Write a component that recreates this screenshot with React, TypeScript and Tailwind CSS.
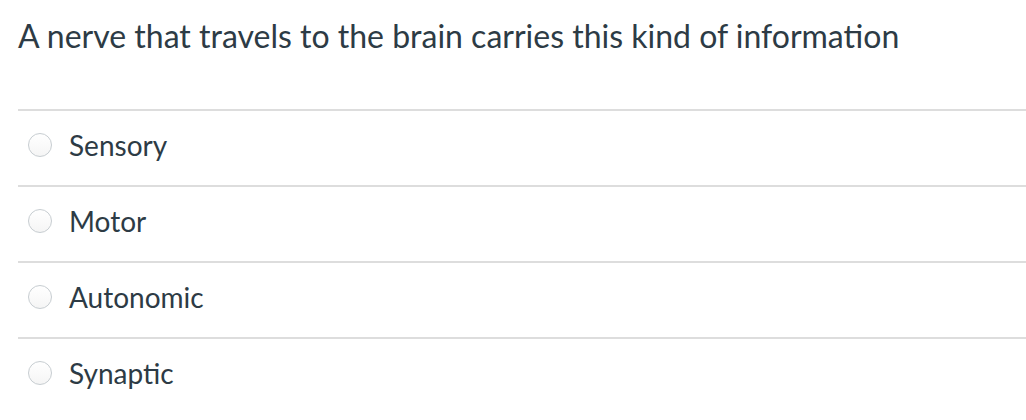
import React from "react";

const options = ["Sensory", "Motor", "Autonomic", "Synaptic"];

export default function App() {
  return (
    <div
      className="w-[1026px] h-[420px] bg-white overflow-hidden text-[#2d3b45]"
      style={{ fontFamily: "Lato, 'Liberation Sans', sans-serif" }}
    >
      <div className="pl-[18px]">
        <div className="pt-[16px] h-[109px]">
          <p className="text-[32px] leading-[40px]">
            A nerve that travels to the brain carries this kind of information
          </p>
        </div>
        <div className="flex flex-col">
          {options.map((o) => (
            <div
              key={o}
              className="h-[76px] pb-[6px] border-t-2 border-[#dddddd] flex items-center"
            >
              <span className="ml-[10px] w-[24px] h-[24px] rounded-full border border-[#c7cdd1] bg-gradient-to-b from-white to-[#f5f5f5] shrink-0" />
              <span className="ml-[17px] text-[28px] leading-[32px]">{o}</span>
            </div>
          ))}
        </div>
      </div>
    </div>
  );
}
